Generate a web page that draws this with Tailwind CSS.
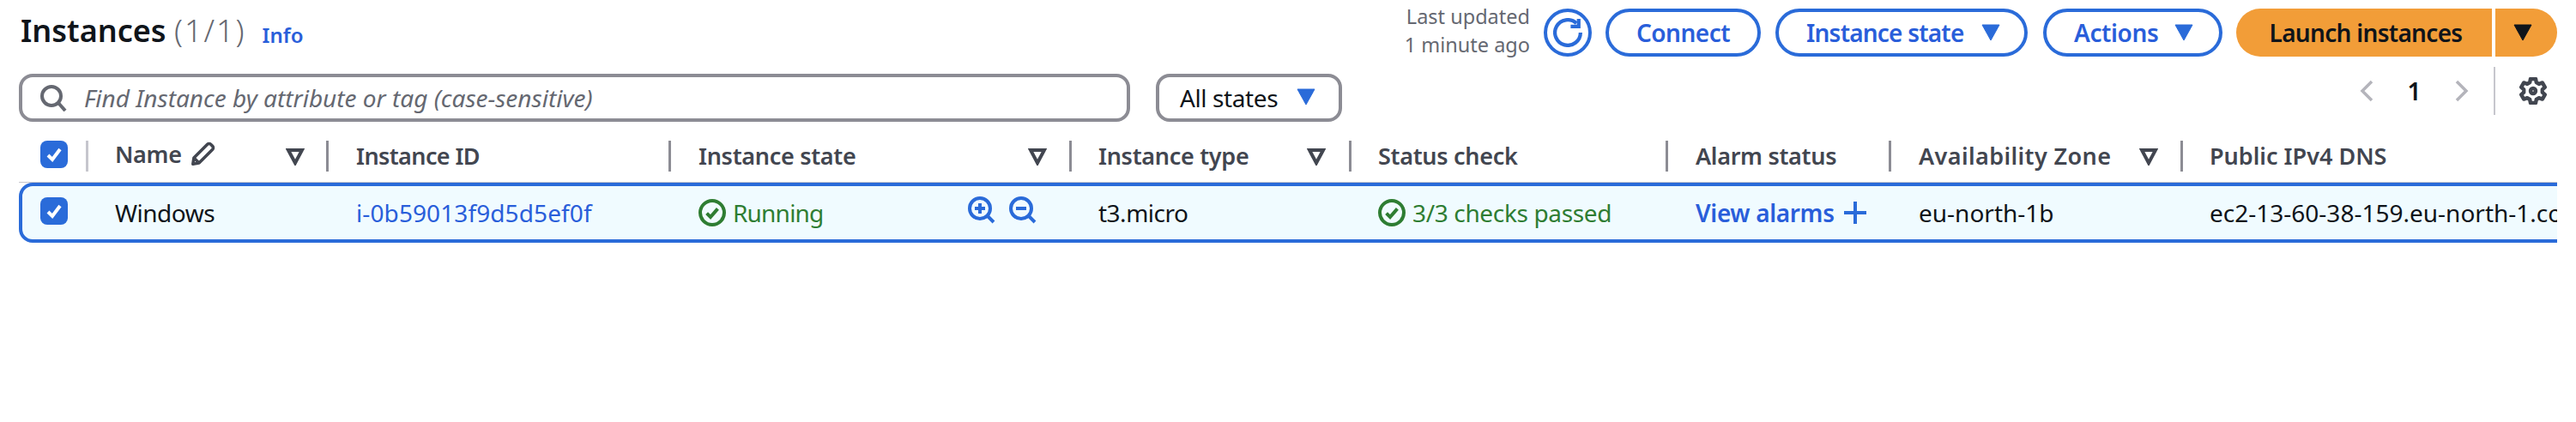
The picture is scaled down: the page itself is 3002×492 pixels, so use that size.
<!doctype html>
<html>
<head>
<meta charset="utf-8">
<script src="https://cdn.jsdelivr.net/npm/@tailwindcss/browser@4"></script>
</head>
<body class="bg-white">
<div class="w-[3002px] h-[492px] overflow-hidden pl-[22px] pr-[22px] pt-[6px] font-['Noto_Sans',sans-serif] text-[28px] leading-[40px] text-[#0f141a]">

  <!-- Title and actions -->
  <div class="flex items-start h-[56px]">
    <h1 class="pl-[2px] mt-[2px] text-[36px] leading-[56px] font-semibold">Instances <span class="font-light tracking-[2px] text-[#656871]">(1/1)</span></h1>
    <a class="ml-[19px] mt-[11px] text-[24px] leading-[48px] font-semibold text-[#295eda]">Info</a>
    <div class="ml-auto flex items-center">
      <div class="text-right text-[23.5px] leading-[33px] text-[#656871] mr-[16px] mt-[-3px]">Last updated<br>1 minute ago</div>
      <button class="w-[56px] h-[56px] rounded-full border-[4px] border-[#2a6bd9] flex items-center justify-center mr-[16px]">
        <svg class="w-[34px] h-[34px]" viewBox="0 0 16 16" fill="none" stroke="#2a6bd9" stroke-width="2"><path d="M15 8a7 7 0 1 1-2.200-5.100"/><path d="M14 0.500v4.200H9.600"/></svg>
      </button>
      <button class="w-[181px] h-[56px] rounded-[28px] border-[4px] border-[#2a6bd9] text-[#295eda] font-semibold text-[28px] tracking-[-0.5px] mr-[17px]">Connect</button>
      <button class="w-[294px] h-[56px] rounded-[28px] border-[4px] border-[#2a6bd9] text-[#295eda] font-semibold tracking-[-0.8px] flex items-center pl-[32px] mr-[18px]">Instance state
        <svg class="w-[22px] h-[20px] ml-[21px]" viewBox="0 0 22 20"><path d="M1 1h20l-10 18z" fill="#2a6bd9" stroke="#2a6bd9" stroke-linejoin="round"/></svg>
      </button>
      <button class="w-[209px] h-[56px] rounded-[28px] border-[4px] border-[#2a6bd9] text-[#295eda] font-semibold tracking-[-0.4px] flex items-center pl-[32px] mr-[16px]">Actions
        <svg class="w-[22px] h-[20px] ml-[19px]" viewBox="0 0 22 20"><path d="M1 1h20l-10 18z" fill="#2a6bd9" stroke="#2a6bd9" stroke-linejoin="round"/></svg>
      </button>
      <button class="w-[298px] h-[56px] rounded-l-[28px] bg-[#f29d38] text-[#0f141a] font-semibold tracking-[-0.7px] pl-[4px] mr-[4px]">Launch instances</button>
      <button class="w-[72px] h-[56px] rounded-r-[28px] bg-[#f29d38] flex items-center pl-[21px]">
        <svg class="w-[22px] h-[20px]" viewBox="0 0 22 20"><path d="M1 1h20l-10 18z" fill="#0f141a" stroke="#0f141a" stroke-linejoin="round"/></svg>
      </button>
    </div>
  </div>

  <!-- Search and pagination -->
  <div class="flex items-center h-[56px] mt-[24px]">
    <div class="w-[1295px] h-[56px] rounded-[16px] border-[4px] border-[#8c8c94] flex items-center pl-[20px]">
      <svg class="w-[32px] h-[32px] shrink-0" viewBox="0 0 16 16" fill="none" stroke="#656871" stroke-width="2"><circle cx="7" cy="7" r="5.500"/><path d="M11 11l4 4.500"/></svg>
      <span class="ml-[20px] italic text-[#656871]">Find Instance by attribute or tag (case-sensitive)</span>
    </div>
    <div class="ml-[30px] w-[217px] h-[56px] rounded-[16px] border-[4px] border-[#8c8c94] flex items-center pl-[24px]">
      <span class="tracking-[-0.4px]">All states</span>
      <svg class="w-[22px] h-[20px] ml-[22px] mt-[-2px]" viewBox="0 0 22 20"><path d="M1 1h20l-10 18z" fill="#2a6bd9" stroke="#2a6bd9" stroke-linejoin="round"/></svg>
    </div>
    <div class="ml-auto flex items-center mt-[-16px] h-[56px]">
      <svg class="w-[16px] h-[26px]" viewBox="0 0 16 26" fill="none" stroke="#b4b4bb" stroke-width="3.500"><path d="M14 2L3 13l11 11"/></svg>
      <span class="w-[95px] text-center font-semibold">1</span>
      <svg class="w-[16px] h-[26px]" viewBox="0 0 16 26" fill="none" stroke="#b4b4bb" stroke-width="3.500"><path d="M2 2l11 11L2 24"/></svg>
      <div class="ml-[29px] w-[2px] h-[56px] bg-[#c6c6cd]"></div>
      <svg class="ml-[28px] mr-[12px] w-[32px] h-[32px]" viewBox="0 0 16 16" fill="none" stroke="#424650" stroke-width="2.200" stroke-linejoin="round"><path d="M6.500 1h3l.4 2 1.500.9 2-.7 1.500 2.600-1.500 1.400v1.600l1.500 1.400-1.500 2.600-2-.7-1.500.9-.4 2h-3l-.4-2-1.500-.9-2 .7L1.100 10.200l1.500-1.400V7.200L1.100 5.800l1.500-2.600 2 .7 1.500-.9z"/><circle cx="8" cy="8" r="1.500"/></svg>
    </div>
  </div>

  <!-- Table -->
  <div class="mt-[22px] w-[2958px]">
    <div class="grid grid-cols-[78px_280px_399px_467px_326px_369px_260px_340px_1fr] h-[49px] border-b-[1px] border-[#c6c6cd] text-[#424650] font-semibold text-[27px] leading-[36px] tracking-[-0.3px] items-start">
      <div class="pl-[25px]">
        <span class="flex w-[32px] h-[32px] rounded-[8px] bg-[#2a6bd9] items-center justify-center">
          <svg class="w-[24px] h-[24px]" viewBox="0 0 24 24" fill="none" stroke="#fff" stroke-width="4"><path d="M5 13l5 5 9-12"/></svg>
        </span>
      </div>
      <div class="h-[36px] border-l-[3px] border-[#c6c6cd] pl-[31px] flex items-start">
        <span class="leading-[32px]">Name</span>
        <svg class="w-[30px] h-[30px] ml-[10px]" viewBox="0 0 16 16" fill="none" stroke="#424650" stroke-width="1.900" stroke-linejoin="round"><path d="M1.500 14.500l.6-3.800L10.500 2.300a1.500 1.500 0 0 1 2.100 0l1.100 1.100a1.500 1.500 0 0 1 0 2.100L5.300 13.900z"/><path d="M2.100 10.700l3.200 3.200"/></svg>
        <svg class="w-[22px] h-[22px] ml-auto mr-[25px] mt-[7px]" viewBox="0 0 22 22" fill="none" stroke="#424650" stroke-width="4"><path d="M3 4h16l-8 15z"/></svg>
      </div>
      <div class="h-[36px] border-l-[3px] border-[#8c8c94] pl-[32px] flex items-center tracking-[-0.6px]">Instance ID</div>
      <div class="h-[36px] border-l-[3px] border-[#8c8c94] pl-[32px] flex items-center">Instance state
        <svg class="w-[22px] h-[22px] ml-auto mr-[26px]" viewBox="0 0 22 22" fill="none" stroke="#424650" stroke-width="4"><path d="M3 4h16l-8 15z"/></svg>
      </div>
      <div class="h-[36px] border-l-[3px] border-[#8c8c94] pl-[31px] flex items-center">Instance type
        <svg class="w-[22px] h-[22px] ml-auto mr-[27px]" viewBox="0 0 22 22" fill="none" stroke="#424650" stroke-width="4"><path d="M3 4h16l-8 15z"/></svg>
      </div>
      <div class="h-[36px] border-l-[3px] border-[#8c8c94] pl-[31px] flex items-center">Status check</div>
      <div class="h-[36px] border-l-[3px] border-[#8c8c94] pl-[32px] flex items-center">Alarm status</div>
      <div class="h-[36px] border-l-[3px] border-[#8c8c94] pl-[32px] flex items-center tracking-[0.4px]">Availability Zone
        <svg class="w-[22px] h-[22px] ml-auto mr-[26px]" viewBox="0 0 22 22" fill="none" stroke="#424650" stroke-width="4"><path d="M3 4h16l-8 15z"/></svg>
      </div>
      <div class="h-[36px] border-l-[3px] border-[#8c8c94] pl-[31px] flex items-center tracking-[0px]">Public IPv4 DNS</div>
    </div>
    <div class="overflow-hidden">
    <div class="grid grid-cols-[74px_280px_399px_467px_326px_369px_260px_340px_1fr] h-[70px] w-[2964px] border-[4px] border-[#2a6bd9] rounded-l-[16px] bg-[#f0fbff] items-center whitespace-nowrap">
      <div class="pl-[21px]">
        <span class="flex w-[32px] h-[32px] rounded-[8px] bg-[#2a6bd9] items-center justify-center mt-[-4px]">
          <svg class="w-[24px] h-[24px]" viewBox="0 0 24 24" fill="none" stroke="#fff" stroke-width="4"><path d="M5 13l5 5 9-12"/></svg>
        </span>
      </div>
      <div class="pl-[34px] tracking-[-0.5px]">Windows</div>
      <div class="pl-[35px] text-[#295eda] tracking-[0.1px]">i-0b59013f9d5d5ef0f</div>
      <div class="pl-[35px] flex items-center text-[#2e7d32] tracking-[-0.8px]">
        <svg class="w-[32px] h-[32px] mr-[8px]" viewBox="0 0 16 16" fill="none" stroke="#2e7d32" stroke-width="2"><circle cx="8" cy="8" r="7"/><path d="M4.800 8.300l2.200 2.200 4.200-4.800"/></svg>
        Running
        <svg class="w-[32px] h-[32px] ml-auto mt-[-6px]" viewBox="0 0 16 16" fill="none" stroke="#2a6bd9" stroke-width="2"><circle cx="7" cy="7" r="6"/><path d="M11 11l4 4M7 4v6M4 7h6"/></svg>
        <svg class="w-[32px] h-[32px] ml-[16px] mr-[38px] mt-[-6px]" viewBox="0 0 16 16" fill="none" stroke="#2a6bd9" stroke-width="2"><circle cx="7" cy="7" r="6"/><path d="M11 11l4 4M4 7h6"/></svg>
      </div>
      <div class="pl-[34px] tracking-[-0.5px]">t3.micro</div>
      <div class="pl-[34px] flex items-center text-[#2e7d32] tracking-[-0.35px]">
        <svg class="w-[32px] h-[32px] mr-[8px]" viewBox="0 0 16 16" fill="none" stroke="#2e7d32" stroke-width="2"><circle cx="8" cy="8" r="7"/><path d="M4.800 8.300l2.200 2.200 4.200-4.800"/></svg>
        3/3 checks passed
      </div>
      <div class="pl-[35px] flex items-center font-semibold text-[#295eda] tracking-[-0.35px]">View alarms
        <svg class="w-[28px] h-[28px] ml-[10px]" viewBox="0 0 28 28" fill="none" stroke="#2a6bd9" stroke-width="4"><path d="M14 1v26M1 14h26"/></svg>
      </div>
      <div class="pl-[35px]">eu-north-1b</div>
      <div class="pl-[34px] overflow-hidden">ec2-13-60-38-159.eu-north-1.compute.amazonaws.com</div>
    </div>
    </div>
  </div>
</div>
</body>
</html>
